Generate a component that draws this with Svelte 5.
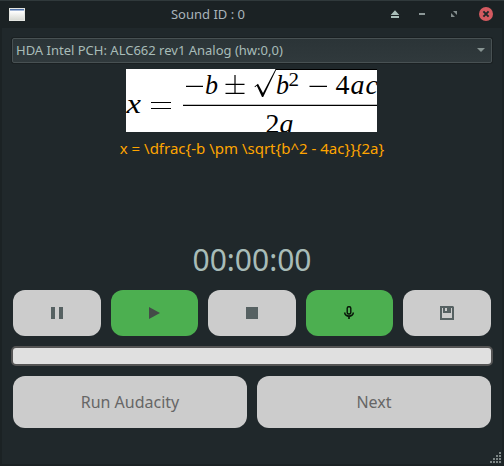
<script>
  const device = 'HDA Intel PCH: ALC662 rev1 Analog (hw:0,0)';
  const formula = 'x = \\dfrac{-b \\pm \\sqrt{b^2 - 4ac}}{2a}';
  const time = '00:00:00';
</script>

<div class="window">
  <header>
    <svg class="app" width="16" height="13" viewBox="0 0 16 13">
      <defs>
        <linearGradient id="pane" x1="0" y1="0" x2="0" y2="1">
          <stop offset="0" stop-color="#fff" /><stop offset="1" stop-color="#d8dad4" />
        </linearGradient>
      </defs>
      <rect width="16" height="13" fill="#e4e6e2" />
      <rect x="1" y="3" width="14" height="9" fill="url(#pane)" />
      <rect x="1" y="1" width="14" height="1" fill="#5272a8" />
      <rect x="1" y="2" width="14" height="1" fill="#a4b8d8" />
    </svg>
    <h1>Sound ID : 0</h1>
    <svg class="controls" width="124" height="28" viewBox="380 0 124 28">
      <path d="M395 10.3L399.3 15H390.7ZM391 16h8v2h-8z" fill="#a9bfb9" />
      <path d="M419 13h6v2h-6z" fill="#8c9797" />
      <path d="M453 11h4v4zM451 13l4 4h-4z" fill="#848e8e" />
      <circle cx="486" cy="14" r="7" fill="#d45a60" />
      <path d="M483.4 11.4l5.2 5.2M488.6 11.4l-5.2 5.2" stroke="#20282a" stroke-width="2" />
    </svg>
  </header>

  <main>
    <div class="combo"><span>{device}</span><i></i></div>

    <svg class="math" width="251" height="63" viewBox="126 69 251 63">
      <rect x="126" y="69" width="251" height="63" fill="#fff" />
      <g class="it">
        <text x="126.5" y="113" textLength="14.5" lengthAdjust="spacingAndGlyphs">x</text>
        <text x="205" y="94" textLength="13" lengthAdjust="spacingAndGlyphs">b</text>
        <text x="276" y="94" textLength="13" lengthAdjust="spacingAndGlyphs">b</text>
        <text x="350.5" y="94">a</text>
        <text x="365.5" y="94">c</text>
        <text x="279.500" y="132.500">a</text>
      </g>
      <g class="up">
        <text x="288.5" y="86" font-size="19" style:font-size="19px" textLength="10.5" lengthAdjust="spacingAndGlyphs">2</text>
        <text x="335.5" y="94">4</text>
        <text x="265.5" y="132.5">2</text>
      </g>
      <path
        d="M151 102.5h20M151 108.5h20M186 86.3h17M225.500 84.300h19M235 75v18M225.500 93.300h19M309.500 86.300h17.500"
        fill="none" stroke="#000" stroke-width="1.200" />
      <path d="M183 105.400h194M275.500 69.500H377" stroke="#000" stroke-width="1.200" />
      <path d="M254.500 86.500L258 83.700L263 93L275.500 69.200L276.300 69.600L263.200 97H262L256.800 85.800L255 87.200Z" />
    </svg>
    <p class="source">{formula}</p>

    <div class="time">{time}</div>

    <div class="row tools">
      <button aria-label="Pause">
        <svg width="16" height="16"><path d="M2 2h4v12H2zM10 2h4v12h-4z" fill="#566162" /></svg>
      </button>
      <button class="on" aria-label="Play">
        <svg width="16" height="16"><path d="M3 2l11 6-11 6z" fill="#444b48" /></svg>
      </button>
      <button aria-label="Stop">
        <svg width="16" height="16"><path d="M2 2h12v12H2z" fill="#566162" /></svg>
      </button>
      <button class="on" aria-label="Record">
        <svg class="mic" width="16" height="16" fill="none" stroke="#081508" stroke-width="1.400">
          <rect x="6.200" y="1.700" width="3.600" height="7.300" rx="1.500" />
          <path d="M3.700 7.500a4.300 3.600 0 0 0 8.600 0M8 11v3" stroke-width="1.600" />
        </svg>
      </button>
      <button aria-label="Save">
        <svg width="16" height="16">
          <path d="M1 1h13l1 1v13H1zM3 3v10h10V3h-1v5H4V3z" fill="#566162" fill-rule="evenodd" />
          <path d="M6 3h2v3H6z" fill="#ccc" />
        </svg>
      </button>
    </div>

    <div class="progress"></div>

    <div class="row actions">
      <button>Run Audacity</button>
      <button>Next</button>
    </div>
  </main>

  <svg class="grip" width="12" height="12" fill="#7c8585">
    <path d="M9 0h2v2H9zM6 3h2v2H6zM9 3h2v2H9zM3 6h2v2H3zM6 6h2v2H6zM9 6h2v2H9zM0 9h2v2H0zM3 9h2v2H3zM6 9h2v2H6zM9 9h2v2H9z" />
  </svg>
</div>

<style>
  .window {
    position: relative;
    box-sizing: border-box;
    width: 504px;
    height: 466px;
    overflow: hidden;
    padding: 0 2px 2px;
    background: #1b2224;
    border-top: 1px solid #30393b;
    font-family: "Noto Sans", sans-serif;
  }
  header {
    display: flex;
    align-items: center;
    height: 27px;
    margin: 0 -2px;
    background: #1b2224;
  }
  .app { margin-left: 9px; }
  h1 {
    flex: 1;
    margin: 0 0 0 11px;
    text-align: center;
    font-size: 13px;
    font-weight: 400;
    line-height: 27px;
    color: #a9b4bb;
    white-space: pre;
  }
  h1 { padding-right: 0; margin-right: 0; }
  .controls { margin-top: -1px; }
  main {
    box-sizing: border-box;
    height: 436px;
    padding: 10px 9px 0;
    background: #20282b;
  }
  .combo {
    box-sizing: border-box;
    display: flex;
    align-items: center;
    justify-content: space-between;
    height: 25px;
    margin: 0 1px;
    padding: 0 6px 0 3px;
    border: 1px solid #485153;
    border-radius: 2px;
    box-shadow: 0 0 0 1px #1a2022;
    background: linear-gradient(#2b3437, #30393c);
    color: #a8bcb8;
    font-size: 13px;
    line-height: 21px;
  }
  .combo span { padding-bottom: 1px; }
  .combo i {
    margin-bottom: 1px;
    border: 4px solid transparent;
    border-top-color: #879492;
    border-bottom: 0;
  }
  .math { display: block; margin: 6px 0 0 115px; }
  .it, .up { font-family: "Liberation Serif", serif; font-size: 28px; }
  .it { font-style: italic; }
  .source {
    margin: 5px 0 0;
    text-align: center;
    color: #ffa500;
    font-size: 15px;
    line-height: 22px;
    white-space: pre;
  }
  .time {
    height: 60px;
    margin-top: 71px;
    text-align: center;
    color: #a8bcb8;
    font-size: 30px;
    line-height: 60px;
  }
  .row { display: flex; gap: 10px; margin: 0 2px; }
  .row button {
    display: flex;
    flex: 1;
    align-items: center;
    justify-content: center;
    padding: 0;
    border: 0;
    border-radius: 12px;
    background: #ccc;
    color: #666;
    font: 16px "Noto Sans", sans-serif;
  }
  .row button.on { background: #4caf50; }
  .tools button { height: 46px; }
  .mic { margin-right: 2px; }
  .progress {
    box-sizing: border-box;
    height: 20px;
    margin: 10px 0;
    border: 2px solid #555;
    border-radius: 5px;
    background: #e0e0e0;
  }
  .actions button { height: 52px; }
  .grip { position: absolute; right: 2px; bottom: 2px; }
</style>
